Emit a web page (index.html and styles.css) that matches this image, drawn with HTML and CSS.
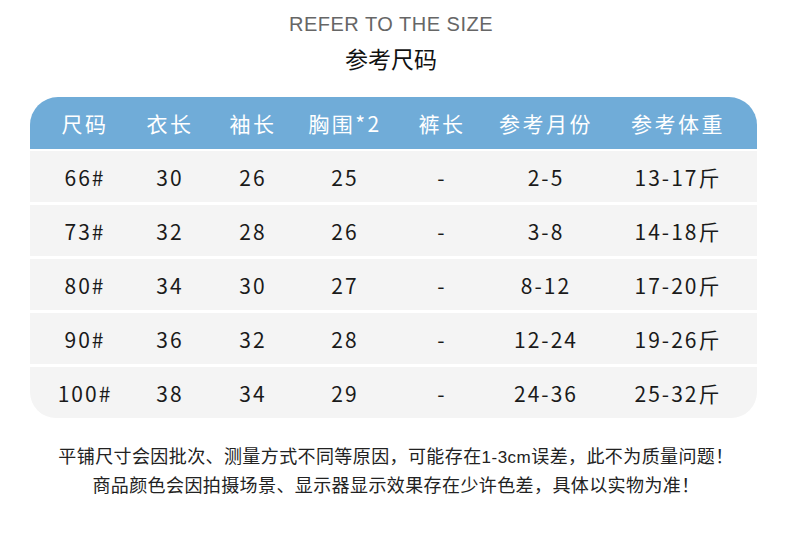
FILE: index.html
```html
<!DOCTYPE html>
<html lang="zh-CN">
<head>
<meta charset="utf-8">
<link rel="stylesheet" href="styles.css">
</head>
<body>
<div class="page">
  <div class="title-en">REFER TO THE SIZE</div>
  <div class="title-cn">参考尺码</div>
  <div class="table">
    <div class="row head">
      <div>尺码</div><div>衣长</div><div>袖长</div><div>胸围*2</div><div>裤长</div><div>参考月份</div><div class="last">参考体重</div>
    </div>
    <div class="row">
      <div>66#</div><div>30</div><div>26</div><div>25</div><div>-</div><div>2-5</div><div class="last">13-17斤</div>
    </div>
    <div class="row">
      <div>73#</div><div>32</div><div>28</div><div>26</div><div>-</div><div>3-8</div><div class="last">14-18斤</div>
    </div>
    <div class="row">
      <div>80#</div><div>34</div><div>30</div><div>27</div><div>-</div><div>8-12</div><div class="last">17-20斤</div>
    </div>
    <div class="row">
      <div>90#</div><div>36</div><div>32</div><div>28</div><div>-</div><div>12-24</div><div class="last">19-26斤</div>
    </div>
    <div class="row end">
      <div>100#</div><div>38</div><div>34</div><div>29</div><div>-</div><div>24-36</div><div class="last">25-32斤</div>
    </div>
  </div>
  <div class="note">
    <div>平铺尺寸会因批次、测量方式不同等原因，可能存在<span class="latin">1-3cm</span>误差，此不为质量问题！</div>
    <div>商品颜色会因拍摄场景、显示器显示效果存在少许色差，具体以实物为准！</div>
  </div>
</div>
</body>
</html>
```

FILE: styles.css
```css
html, body {
  margin: 0;
  padding: 0;
  background: #ffffff;
}
.page {
  width: 790px;
  height: 554px;
  font-family: "Noto Sans CJK SC", "Noto Sans", sans-serif;
  color: #1a1a1a;
}
.title-en {
  padding-top: 12px;
  height: 24px;
  line-height: 24px;
  text-align: center;
  padding-right: 8px;
  font-family: "Liberation Sans", Arial, sans-serif;
  font-size: 20px;
  font-weight: 300;
  letter-spacing: 0.5px;
  color: #666666;
}
.title-cn {
  margin-top: 7px;
  height: 30px;
  line-height: 30px;
  text-align: center;
  padding-right: 8px;
  font-size: 23px;
  color: #111111;
}
.table {
  margin: 24px 0 0 30px;
  width: 727px;
}
.row {
  display: grid;
  grid-template-columns: 110px 60px 106px 78px 116px 92px 165px;
  height: 51px;
  margin-top: 3px;
  background: #f4f4f4;
  align-items: center;
  justify-items: center;
  font-size: 21px;
  letter-spacing: 2px;
  color: #1a1a1a;
}
.row > div {
  white-space: nowrap;
}
.row .last {
  padding-left: 7px;
}
.row.head {
  margin-top: 0;
  height: 52px;
  background: #70acd8;
  color: #ffffff;
  font-size: 21px;
  letter-spacing: 2.5px;
  border-radius: 28px 28px 0 0;
}
.row.head + .row {
  margin-top: 2px;
}
.row.end {
  border-radius: 0 0 26px 26px;
}
.note {
  margin-top: 24px;
  text-align: center;
  font-size: 18px;
  line-height: 27px;
  letter-spacing: 0.4px;
  color: #222222;
  padding-left: 2px;
}
.note .latin {
  font-family: "Liberation Sans", Arial, sans-serif;
  font-size: 17px;
  letter-spacing: 0.5px;
}
```
